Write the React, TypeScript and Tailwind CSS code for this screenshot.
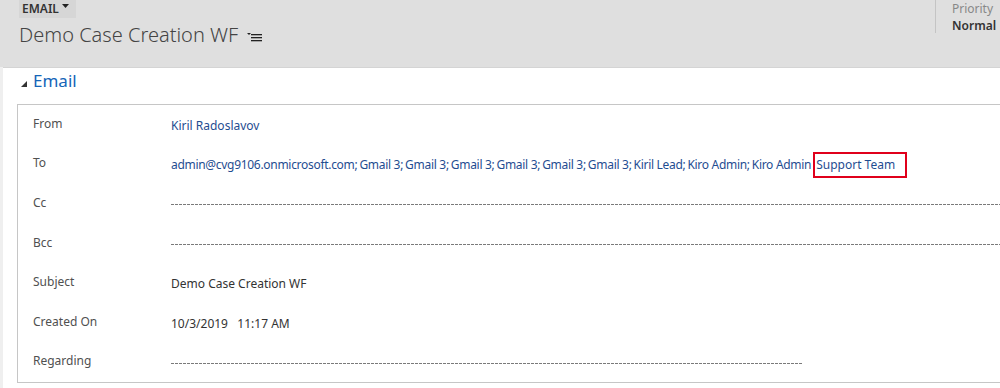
import React from "react";

const font = { fontFamily: '"Segoe UI", "Noto Sans", "Open Sans", sans-serif' };

function Dashed({ width }: { width?: string }) {
  return (
    <div
      className={`h-px bg-[repeating-linear-gradient(to_right,#7a7a7a_0,#7a7a7a_3px,transparent_3px,transparent_4px)] ${width ?? "flex-1"}`}
    />
  );
}

const toList = [
  "admin@cvg9106.onmicrosoft.com",
  "Gmail 3",
  "Gmail 3",
  "Gmail 3",
  "Gmail 3",
  "Gmail 3",
  "Gmail 3",
  "Kiril Lead",
  "Kiro Admin",
  "Kiro Admin",
];

function Row({ label, children }: { label: string; children: React.ReactNode }) {
  return (
    <div className="flex h-[39.6px] items-center">
      <div className="w-[153px] shrink-0 pb-[2px] pl-[15px] text-[12px] text-[#505050]">{label}</div>
      <div className="flex flex-1 items-center pt-[2px] text-[12px]">{children}</div>
    </div>
  );
}

export default function App() {
  return (
    <div className="h-[388px] w-[1000px] overflow-hidden bg-[#efefef]" style={font}>
      <div className="relative flex h-[67px] bg-[#dfdfdf]">
        <div className="pl-[19px]">
          <div className="flex h-[18px] w-[57px] items-center bg-[#d6d6d6] pl-[3px] text-[12px] font-semibold leading-none text-[#333]">
            EMAIL
            <svg width="7" height="5" viewBox="0 0 7 5" className="ml-[3px] -mt-[5px]">
              <path d="M0 0h7L3.5 4z" fill="#222" />
            </svg>
          </div>
          <div className="mt-[7px] flex items-center">
            <span className="text-[20px] font-light leading-none text-[#444]">Demo Case Creation WF</span>
            <svg width="16" height="10" viewBox="0 0 16 10" className="ml-[9px] mt-[4px]">
              <path d="M0 1h4L2 3z" fill="#222" />
              <rect x="4" y="2" width="11" height="1.3" fill="#222" />
              <rect x="4" y="5" width="11" height="1.3" fill="#222" />
              <rect x="4" y="8" width="11" height="1.3" fill="#222" />
            </svg>
          </div>
        </div>
        <div className="ml-auto flex h-[33px]">
          <div className="w-px bg-[#c4c4c4]" />
          <div className="w-[64px] pl-[16px] text-[12px] leading-[17px]">
            <div className="text-[#888]">Priority</div>
            <div className="font-semibold text-[#333]">Normal</div>
          </div>
        </div>
      </div>
      <div className="ml-[3px] h-[321px] border-t border-[#d4d4d4] bg-white pl-[14px]">
        <div className="flex h-[36px] items-start pt-[4px]">
          <svg width="6" height="6" viewBox="0 0 6 6" className="ml-[4px] mt-[9px]">
            <path d="M6 0v6H0z" fill="#333" />
          </svg>
          <span className="ml-[6px] text-[17px] leading-none text-[#1565b8]">Email</span>
        </div>
        <div className="border border-r-0 border-[#c6c6c6]">
          <Row label="From">
            <span className="text-[#1f4d91]">Kiril Radoslavov</span>
          </Row>
          <Row label="To">
            <div className="flex items-center whitespace-nowrap text-[#1f4d91]">
              {toList.map((t, i) => (
                <span key={i} className="mr-[2px] tracking-[-0.3px]">
                  {t}
                  {i < toList.length - 1 ? ";" : ""}
                </span>
              ))}
              <span className="box-border border-2 border-[#e0001b] px-[1px] py-[5px] pr-[10px] leading-none">
                Support Team
              </span>
            </div>
          </Row>
          <Row label="Cc">
            <Dashed />
          </Row>
          <Row label="Bcc">
            <Dashed />
          </Row>
          <Row label="Subject">
            <span className="text-[#333]">Demo Case Creation WF</span>
          </Row>
          <Row label="Created On">
            <span className="text-[#333] whitespace-pre">10/3/2019   11:17 AM</span>
          </Row>
          <Row label="Regarding">
            <Dashed width="w-[631px]" />
          </Row>
        </div>
      </div>
    </div>
  );
}
